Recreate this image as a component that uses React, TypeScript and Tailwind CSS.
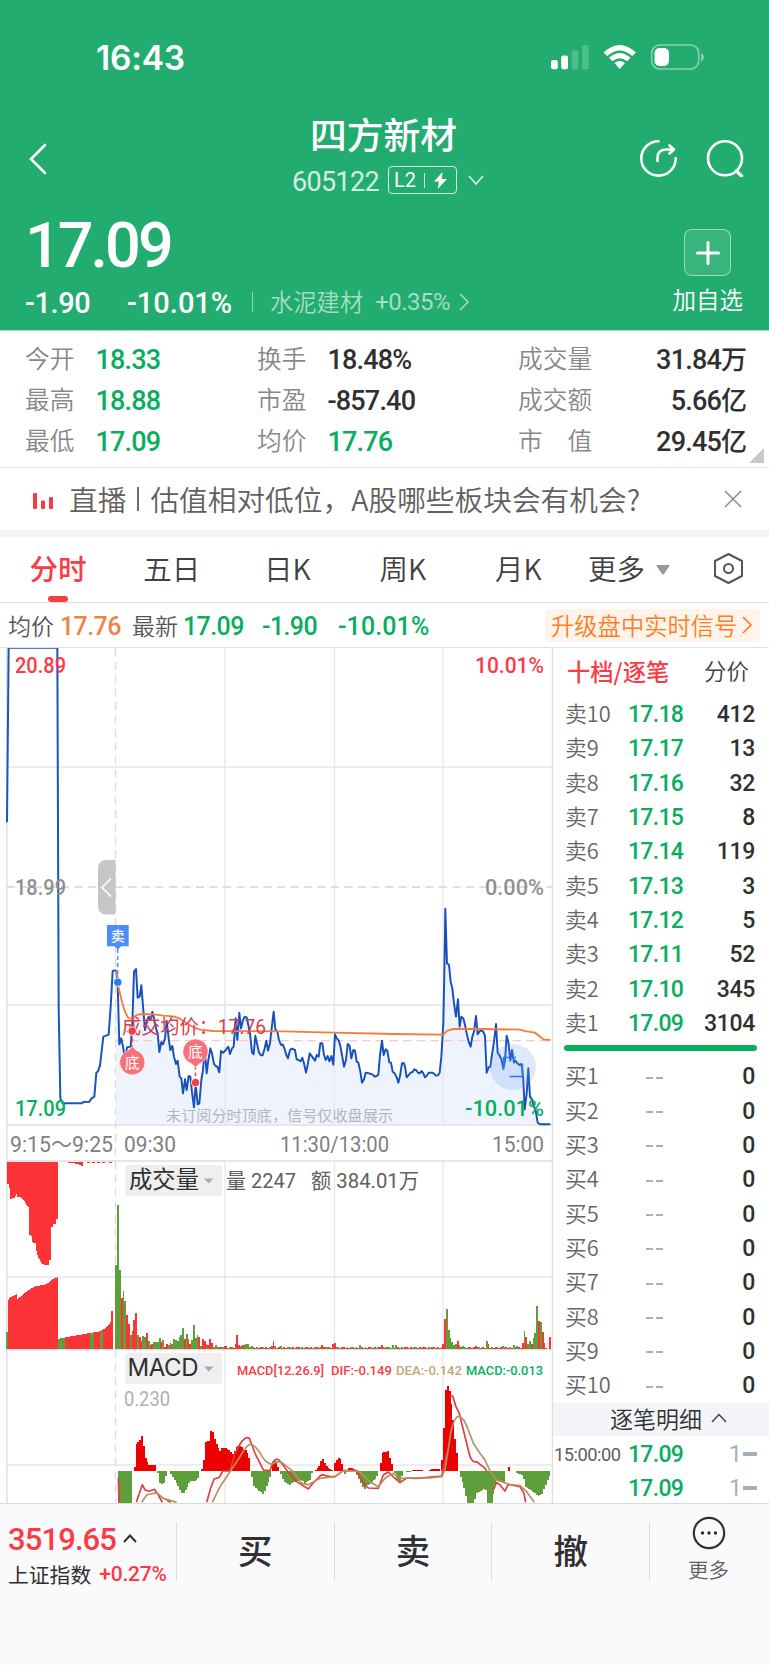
import type { ReactNode } from "react";

type Anchor = [number, number];

const GREEN = "#5f9f3b";
const RED = "#fe3338";

// One bar per minute. The plots use three units per pixel.
const BAR_STEP = 5.46;

const sellOrders = [
  { label: "卖10", price: "17.18", volume: 412 },
  { label: "卖9", price: "17.17", volume: 13 },
  { label: "卖8", price: "17.16", volume: 32 },
  { label: "卖7", price: "17.15", volume: 8 },
  { label: "卖6", price: "17.14", volume: 119 },
  { label: "卖5", price: "17.13", volume: 3 },
  { label: "卖4", price: "17.12", volume: 5 },
  { label: "卖3", price: "17.11", volume: 52 },
  { label: "卖2", price: "17.10", volume: 345 },
  { label: "卖1", price: "17.09", volume: 3104 },
];

const buyOrders = ["买1", "买2", "买3", "买4", "买5", "买6", "买7", "买8", "买9", "买10"];

const auctionLine =
  "21,547 26,23 172,23 176,1100 181,1375 188,1390 246,1390 250,1386 268,1385 274,1376 283,1370 289,1298 294,1294 300,1276 310,1190 326,1184 332,1100 338,993 348,991";

const priceLine =
  "349,990 353,1030 358,1213 364,1195 370,1225 375,1262 381,1222 392,1220 397,1150 402,995 408,987 413,1073 419,1070 424,1036 430,1110 435,1170 441,1142 446,1130 452,1140 457,1115 462,1135 468,1165 473,1180 478,1236 484,1206 489,1213 495,1195 500,1142 506,1195 511,1230 517,1218 522,1250 528,1272 533,1262 539,1310 544,1315 549,1360 555,1318 560,1350 566,1308 571,1310 577,1365 582,1402 587,1330 593,1393 598,1390 604,1320 609,1290 614,1225 620,1300 625,1260 631,1225 636,1240 642,1272 647,1278 652,1280 658,1297 663,1233 669,1238 674,1234 685,1220 690,1242 696,1225 701,1220 707,1135 712,1200 718,1118 723,1165 729,1140 734,1130 740,1132 745,1155 750,1180 756,1238 761,1243 766,1187 772,1215 777,1238 783,1246 788,1246 794,1225 799,1202 804,1232 810,1210 815,1165 821,1115 826,1168 832,1175 837,1200 843,1215 848,1213 853,1224 859,1245 864,1255 870,1230 875,1226 885,1230 890,1258 896,1260 902,1264 907,1253 912,1270 918,1298 923,1275 929,1240 934,1247 945,1262 950,1245 956,1250 961,1210 967,1210 972,1245 977,1260 983,1248 988,1264 994,1248 1000,1274 1005,1183 1010,1195 1016,1201 1021,1218 1026,1245 1032,1280 1038,1260 1043,1212 1049,1218 1054,1255 1060,1230 1065,1232 1070,1265 1075,1268 1081,1295 1086,1328 1092,1318 1097,1298 1108,1300 1118,1304 1124,1310 1130,1308 1135,1304 1140,1245 1146,1202 1151,1245 1157,1228 1162,1232 1168,1267 1173,1268 1178,1295 1184,1300 1190,1312 1195,1328 1200,1308 1206,1270 1212,1270 1216,1285 1220,1312 1232,1298 1238,1296 1243,1288 1248,1290 1254,1298 1259,1300 1265,1293 1270,1300 1275,1312 1281,1306 1286,1298 1297,1298 1303,1302 1308,1307 1314,1306 1319,1298 1324,1250 1330,1150 1333,1000 1336,806 1341,970 1347,975 1352,1025 1357,1045 1362,1090 1368,1130 1374,1078 1379,1160 1384,1130 1390,1135 1395,1155 1400,1180 1406,1205 1412,1220 1417,1190 1422,1175 1428,1128 1433,1183 1438,1175 1444,1170 1450,1176 1455,1188 1460,1298 1466,1282 1471,1280 1476,1245 1482,1205 1488,1152 1493,1238 1498,1245 1504,1258 1510,1285 1515,1262 1520,1187 1525,1205 1531,1262 1536,1230 1542,1268 1547,1262 1552,1270 1558,1275 1565,1272 1570,1320 1574,1408 1580,1360 1585,1285 1590,1370 1596,1378 1601,1400 1606,1405 1613,1448 1620,1453 1651,1453";

const averageLine =
  "350,990 356,1045 366,1085 375,1115 384,1133 395,1137 403,1130 412,1124 430,1122 460,1123 490,1127 520,1129 540,1136 560,1150 580,1162 600,1169 640,1173 850,1174 1000,1178 1180,1182 1330,1184 1342,1172 1360,1167 1450,1167 1560,1169 1580,1174 1605,1178 1615,1186 1630,1198 1651,1200";

const unmatchedVolume =
  "22,125 174,125 174,298 168,298 168,312 158,312 158,322 152,322 152,420 147,420 147,436 135,436 125,430 115,412 110,400 108,370 98,368 95,347 88,345 88,262 80,255 72,240 62,232 52,232 48,218 46,232 30,237 28,192 22,192";

const matchedVolume =
  "24,688 24,542 30,532 50,522 52,536 62,530 75,518 90,508 105,499 135,494 150,485 160,476 174,472 174,688";

// Opening volume, listed minute by minute: top of the bar and its direction
const openingVolume =
  "435g 254g 450g 534r 512g 542g 585r 612r 645g 634r 600r 578r 645g 652r 662r 648g 650g 638r 664g 675r 672r 667g 666g 665g 655g 665r 660g 680r 673r 676g 670r 672g 657g 660g 664g 652g 645g 625g 656r 642g 658r 672r 660g 615g 655g 645g 650r 678g 658r 662r 672g 675r 657r 668r 680g 676g 682r 680g 682r 680g 678r 679r 683g 682g 681r 683r 672r 645r 674r 677g 675r 674g 673g 671g 680g 678g".split(" ");

const volumeSpikes: Record<number, string> = {
  87: "664r", 86: "678r", 88: "678g", 91: "679g", 114: "676r", 117: "680g", 120: "672r", 121: "668r", 122: "680g",
  135: "675g", 147: "675r", 153: "676g", 155: "675g", 181: "672r", 182: "598r", 183: "567g", 184: "630g",
  185: "655g", 186: "665g", 187: "675g", 188: "673g", 189: "663r", 190: "675g", 192: "679g", 199: "679r",
  205: "664g", 206: "672r", 214: "679g", 220: "675g", 222: "678g", 225: "668r", 226: "632g", 227: "650r", 228: "673g",
  229: "664g", 230: "672r", 231: "655g", 232: "638g", 233: "557g", 234: "603r", 235: "605g", 236: "636r",
  237: "668r", 238: "683r", 240: "652r",
};

const macdUp: Anchor[][] = [
  [[404, 1040], [409, 972], [420, 962], [426, 949], [431, 975], [436, 1012], [447, 1035], [466, 1034]],
  [[606, 1046], [612, 1018], [617, 966], [628, 962], [633, 932], [638, 932], [643, 955], [655, 985], [660, 993], [668, 983], [685, 986], [700, 1003], [710, 980], [718, 975], [730, 985], [740, 990], [748, 1015], [753, 1045]],
  [[818, 1030], [826, 1018], [834, 1040], [839, 1050]],
  [[947, 1050], [960, 1035], [967, 1013], [974, 1028], [983, 1044], [998, 1050]],
  [[1005, 1030], [1015, 1012], [1024, 1018], [1029, 1045]],
  [[1040, 1049], [1048, 1042], [1066, 1049]],
  [[1142, 1030], [1147, 1000], [1155, 996], [1164, 994], [1170, 1018], [1178, 1040]],
  [[1240, 1050], [1268, 1050]],
  [[1290, 1049], [1306, 1046], [1322, 1049]],
  [[1327, 1020], [1331, 968], [1336, 815], [1342, 796], [1347, 800], [1352, 835], [1358, 880], [1363, 938], [1370, 995], [1375, 1018]],
  [[1527, 1040], [1530, 1040]],
];

const macdDown: Anchor[][] = [
  [[356, 1150], [396, 1150], [398, 1137]],
  [[475, 1060], [480, 1088], [490, 1094], [498, 1062]],
  [[513, 1062], [520, 1075], [535, 1098], [548, 1125], [560, 1105], [570, 1085], [585, 1082], [600, 1072]],
  [[756, 1070], [761, 1098], [780, 1115], [790, 1122], [800, 1098], [814, 1062]],
  [[843, 1062], [850, 1082], [868, 1095], [885, 1085], [905, 1080], [915, 1090], [930, 1080], [936, 1058]],
  [[1036, 1061], [1041, 1061]],
  [[1072, 1065], [1085, 1095], [1092, 1110], [1105, 1095], [1125, 1078], [1137, 1062]],
  [[1184, 1058], [1190, 1075], [1200, 1088], [1208, 1062]],
  [[1220, 1057], [1232, 1057]],
  [[1382, 1070], [1386, 1080], [1395, 1110], [1402, 1150], [1424, 1150], [1428, 1120], [1445, 1110], [1458, 1105], [1463, 1150], [1476, 1150], [1482, 1110], [1490, 1080], [1500, 1085], [1515, 1085], [1518, 1060]],
  [[1550, 1058], [1570, 1068], [1576, 1100], [1595, 1112], [1615, 1128], [1625, 1125], [1635, 1100], [1645, 1075], [1653, 1060]],
];

const difLine =
  "M355 1075L357 1147M409 1147L418 1120L427 1094L435 1110L447 1114L463 1108L475 1125L487 1147M500 1140L512 1147M620 1147L632 1105L642 1078L658 1072L668 1053L690 1053L705 1000L720 972Q738 946 748 955L765 1000L775 1020L790 1050L810 1052L820 1025Q832 1008 845 1030L860 1050L890 1085L925 1107L940 1088L965 1064L990 1070L1005 1070L1030 1052L1070 1052L1090 1090L1105 1104L1135 1105L1150 1065L1165 1056L1185 1075L1200 1088L1220 1074L1250 1075L1325 1068L1340 1000M1350 828L1358 828L1368 860L1378 880L1390 930L1405 990Q1414 1032 1430 1025L1455 1045L1460 1053M1480 1110L1490 1087L1500 1095L1515 1113L1525 1093L1560 1100L1572 1120L1577 1147";

const deaLine =
  "M425 1147L440 1125L470 1118L490 1135L530 1147M637 1147L660 1100L690 1055L720 1010Q740 973 752 973Q766 973 790 1015Q812 1043 830 1025L845 1027L880 1055L905 1090L925 1094L960 1075L1005 1070L1030 1052L1075 1053L1110 1085L1135 1100L1155 1075L1180 1060L1200 1075L1240 1074L1290 1074L1325 1070L1335 1050L1352 940Q1362 888 1378 889Q1392 893 1405 930L1420 970L1440 1000L1455 1020L1470 1053L1490 1080L1505 1085L1530 1094L1560 1097L1580 1115L1603 1147";

const volumeBar = (minute: number) => {
  if (minute < openingVolume.length) return openingVolume[minute];
  if (volumeSpikes[minute]) return volumeSpikes[minute];
  if (minute === 239) return null;
  const top = 681 + ((minute * 7) % 5) * 0.6;
  return `${top}${(minute * 5) % 7 < 4 ? "r" : "g"}`;
};

const barPath = (groups: Anchor[][], base: number) =>
  groups
    .map((anchors) => {
      let d = "";
      const end = anchors[anchors.length - 1][0];
      for (let x = anchors[0][0]; x <= end; x += BAR_STEP) {
        const next = Math.max(1, anchors.findIndex((a) => a[0] >= x));
        const [x0, y0] = anchors[next - 1];
        const [x1, y1] = anchors[next];
        const y = y0 + ((y1 - y0) * (x - x0)) / (x1 - x0);
        d += `M${x - 2.8} ${base}V${y}h5.7V${base}z`;
      }
      return d;
    })
    .join("");

const StatusBar = () => (
  <div className="flex h-[115px] justify-between pl-[96px] pr-[64px] pt-[38px]">
    <span className="font-['Inter'] text-[33.5px] font-semibold leading-[40px] tracking-[-0.2px]">16:43</span>
    <svg className="mt-[4px]" width="155" height="30" viewBox="550 42 155 30" fill="white">
      <rect x="551" y="60" width="6.8" height="9.3" rx="2" />
      <rect x="561.2" y="55.5" width="6.8" height="13.8" rx="2" />
      <rect x="571.6" y="50" width="6.8" height="19.3" rx="2" opacity=".2" />
      <rect x="582" y="45" width="6.8" height="24.3" rx="2" opacity=".2" />
      <path d="M603.5 52.5Q619.7 37.5 636 52.5L632.3 56Q619.7 44.8 607.2 56zM609 57.8Q619.7 48.4 630.5 57.8L627 61.2Q619.7 55.2 612.5 61.2zM614.4 63Q619.7 59 625 63L619.7 69z" />
      <rect x="651.7" y="45" width="47" height="24" rx="8" fill="none" stroke="white" strokeWidth="1.6" opacity=".45" />
      <rect x="654.5" y="48" width="14.5" height="18" rx="5" />
      <path d="M701.2 53v8.5q2.6-1.4 2.6-4.2t-2.6-4.3z" opacity=".5" />
    </svg>
  </div>
);

const Header = () => (
  <header className="h-[331px] border-b border-[#a9dec5] bg-[#22ac6f] text-white">
    <StatusBar />
    <div className="flex h-[90px] justify-between pl-[28px] pr-[25px]">
      <svg className="mt-[28px]" width="20" height="32" viewBox="0 0 20 32" fill="none" stroke="white" strokeWidth="2.6" strokeLinecap="round">
        <path d="M17 2L3 16l14 14" />
      </svg>
      <div className="ml-[80px] flex w-[200px] flex-col items-center">
        <h1 className="-mt-[3px] whitespace-nowrap text-[36.8px] font-medium leading-[42px]">四方新材</h1>
        <div className="ml-[9px] mt-[11px] flex h-[30px] items-center">
          <span className="pt-[3px] font-['Roboto'] text-[27px] leading-[30px] tracking-[-0.7px] text-white/80">605122</span>
          <div className="ml-[9px] flex h-[28px] w-[69px] items-center justify-between rounded-[4px] border border-white/80 pl-[5px] pr-[9px]">
            <span className="font-['Roboto'] text-[20px] leading-none">L2</span>
            <span className="h-[15px] w-px bg-white/80" />
            <svg width="13" height="17" viewBox="0 0 13 17" fill="white">
              <path d="M8.5 0L0 9.5h5L3.8 17 13 7H7.8z" />
            </svg>
          </div>
          <svg className="ml-[11px]" width="16" height="11" viewBox="0 0 16 11" fill="none" stroke="white" strokeOpacity=".85" strokeWidth="1.5">
            <path d="M1 1l7 8 7-8" />
          </svg>
        </div>
      </div>
      <svg className="mt-[22px]" width="105" height="40" viewBox="639 137 105 40" fill="none" stroke="white" strokeWidth="2.6" strokeLinecap="round" strokeLinejoin="round">
        <path d="M658.5 141.2a17.2 17.2 0 1 0 17.2 17.2M657.5 161v-3q0-8.500 9-8.500h7M669.500 145.500l4.500 4-4.500 4" />
        <circle cx="725" cy="158.300" r="17" />
        <path d="M736.500 171l5 5" strokeWidth="3.400" />
      </svg>
    </div>
    <div className="flex justify-between pl-[25px] pr-[26px]">
      <div>
        <div className="h-[79px] pt-[9px] font-['Roboto'] text-[63px] font-medium leading-[63px] tracking-[-3px]">17.09</div>
        <div className="flex h-[36px] items-center whitespace-nowrap">
          <span className="w-[102px] pt-[3px] font-['Roboto'] text-[29px] font-medium tracking-[-0.4px]">-1.90</span>
          <span className="w-[125px] pt-[3px] font-['Roboto'] text-[29px] font-medium">-10.01%</span>
          <span className="h-[20px] w-px bg-white/50" />
          <span className="-mt-[2px] ml-[17px] text-[23.3px] font-[350] text-white/60">水泥建材</span>
          <span className="ml-[12px] w-[76px] font-['Roboto'] text-[24px] tracking-[-0.5px] text-white/60">+0.35%</span>
          <svg className="ml-[8px]" width="11" height="18" viewBox="0 0 11 18" fill="none" stroke="white" strokeOpacity=".6" strokeWidth="1.500">
            <path d="M1 1l8 8-8 8" />
          </svg>
        </div>
      </div>
      <div className="flex flex-col items-center pt-[24px]">
        <div className="flex h-[47px] w-[47px] items-center justify-center rounded-[8px] border border-white/50 bg-white/10">
          <svg width="24" height="24" viewBox="0 0 24 24" stroke="white" strokeWidth="3" strokeLinecap="round">
            <path d="M12 1.500v21M1.500 12h21" />
          </svg>
        </div>
        <span className="mt-[7px] text-[23.5px] font-[350] leading-[32px]">加自选</span>
      </div>
    </div>
  </header>
);

interface StatProps {
  label: string;
  value: string;
  unit?: string;
  up?: boolean;
}

const Stat = ({ label, value, unit, up }: StatProps) => (
  <div className="flex h-[41px] items-center">
    <span className="whitespace-pre text-[24.7px] font-[350] text-[#888]">{label}</span>
    <span
      className={`mt-[6px] font-['Roboto','Noto_Sans_CJK_SC'] text-[27px] font-medium tracking-[-0.8px] ${up ? "text-[#08ad5e]" : "text-[#303030]"} ${unit ? "ml-auto" : "ml-[21px]"}`}
    >
      {value}
      {unit && <span className="text-[26px] tracking-normal">{unit}</span>}
    </span>
  </div>
);

const Stats = () => (
  <section className="relative grid h-[137px] auto-rows-[41px] grid-cols-[232px_261px_229px] content-start border-b border-[#e8e8ea] pl-[25px] pt-[6px]">
    <Stat label="今开" value="18.33" up />
    <Stat label="换手" value="18.48%" />
    <Stat label="成交量" value="31.84" unit="万" />
    <Stat label="最高" value="18.88" up />
    <Stat label="市盈" value="-857.40" />
    <Stat label="成交额" value="5.66" unit="亿" />
    <Stat label="最低" value="17.09" up />
    <Stat label="均价" value="17.76" up />
    <Stat label="市　值" value="29.45" unit="亿" />
    <svg className="absolute bottom-[4px] right-[5px]" width="15" height="15" viewBox="0 0 15 15" fill="#c9c9c9">
      <path d="M15 0v15H0z" />
    </svg>
  </section>
);

const LiveNotice = () => (
  <section className="flex h-[62px] items-center pl-[32px] pr-[27px]">
    <svg className="mt-[3px]" width="22" height="16" viewBox="0 0 22 16" fill="#f93b45">
      <rect x="1" width="4" height="16" rx="1" />
      <rect x="9" y="7.5" width="4" height="8.5" rx="1" />
      <rect x="17" y="4" width="4" height="12" rx="1" />
    </svg>
    <span className="ml-[15px] flex items-center whitespace-nowrap text-[28.7px] font-[350] text-[#606060]">
      直播
      <span className="mx-[11px] h-[24px] w-[2px] bg-[#707070]" />
      估值相对低位，A股哪些板块会有机会?
    </span>
    <svg className="ml-auto" width="18" height="18" viewBox="0 0 18 18" stroke="#8a8a8a" strokeWidth="1.5">
      <path d="M1 1l16 16M17 1L1 17" />
    </svg>
  </section>
);

const tabs = ["五日", "日K", "周K", "月K"];

const PeriodTabs = () => (
  <nav className="flex h-[73px] items-center border-b border-t-[7px] border-b-[#dedede] border-t-[#f2f4f8] pr-[26px] text-[28.5px] text-[#404040]">
    <div className="flex h-full w-[114px] flex-col items-center justify-between pl-[2px] pt-[10px] font-medium text-[#f93b45]">
      <span className="leading-[42px]">分时</span>
      <span className="h-[6px] w-[20px] rounded-[3px] bg-[#f93b45]" />
    </div>
    {tabs.map((tab) => (
      <span key={tab} className="-mt-[2px] w-[115.5px] text-center font-[350]">
        {tab}
      </span>
    ))}
    <span className="-mt-[2px] ml-[12px] font-[350]">更多</span>
    <svg className="ml-[11px]" width="14" height="10" viewBox="0 0 14 10" fill="#999">
      <path d="M1 0h12q1 0 .5 1L8 9Q7 10 6 9L.5 1Q0 0 1 0z" />
    </svg>
    <svg className="-mt-[2px] ml-auto" width="29" height="31" viewBox="0 0 29 31" fill="none" stroke="#555" strokeWidth="2" strokeLinejoin="round">
      <path d="M14.5 1L28 8v15l-13.500 7L1 23V8z" />
      <circle cx="14.500" cy="15.500" r="4.500" />
    </svg>
  </nav>
);

const PriceSummary = () => (
  <section className="flex h-[45px] items-center whitespace-nowrap border-b border-[#e2e2e4] pl-[8px] pr-[9px] text-[23px] font-[350] text-[#555]">
    <span>均价</span>
    <span className="ml-[6px] w-[72px] pt-[3px] font-['Roboto'] text-[25px] font-medium tracking-[-0.6px] text-[#f0824b]">17.76</span>
    <span>最新</span>
    <div className="flex pl-[5px] pt-[3px] font-['Roboto'] text-[25px] font-medium tracking-[-0.6px] text-[#08ad5e]">
      <span className="w-[79px]">17.09</span>
      <span className="w-[76px]">-1.90</span>
      <span className="tracking-[0.1px]">-10.01%</span>
    </div>
    <div className="ml-auto flex h-[33px] w-[215px] items-center rounded-[5px] bg-[#fff3ea] pl-[6px] text-[23.3px] text-[#ff7d20]">
      升级盘中实时信号
      <svg className="ml-[5px]" width="11" height="18" viewBox="0 0 11 18" fill="none" stroke="#ff7d20" strokeWidth="1.7">
        <path d="M1 1l8 8-8 8" />
      </svg>
    </div>
  </section>
);

interface LabelProps {
  x: number;
  y: number;
  width: number;
  color: string;
  size?: number;
  weight?: number;
  children: ReactNode;
}

const Label = ({ x, y, width, color, size = 22, weight = 400, children }: LabelProps) => (
  <text
    x={x}
    y={y}
    textLength={width}
    lengthAdjust="spacingAndGlyphs"
    fontSize={size}
    fontWeight={weight}
    fill={color}
    fontFamily="Roboto, 'Noto Sans CJK SC', sans-serif"
  >
    {children}
  </text>
);

const Grid = () => (
  <g fill="none" stroke="#e8e8ea" strokeWidth="1.4">
    <path d="M7 767H552M7 1005H552M7 1277H552M7 1465H552" />
    <path d="M225 648V1125M334.500 648V1125M443 648V1125M225 1161V1503M334.500 1161V1503M443 1161V1503" />
    <path d="M7 1125H552M7 1161H552M7 1349.500H552" stroke="#dededf" />
    <path d="M6.800 648V1503M552.500 648V1503" stroke="#dedee0" />
    <path d="M115.500 648V1503" strokeDasharray="8 5.500" stroke="#dcdcde" />
    <path d="M7 887H552" strokeDasharray="8 5.500" stroke="#ccd6df" />
  </g>
);

const PricePlot = () => (
  <g transform="translate(0 640) scale(.33333)" fill="none" strokeLinejoin="round">
    <polygon points={`348,1453 ${priceLine}`} fill="#eef3fe" />
    <path d="M675 1080V1453M1003 1080V1453M1329 1080V1453M348 1096H1651" stroke="#e6e8ee" strokeWidth="4" />
    <path d="M348 1202H1651" stroke="#f9c8cd" strokeWidth="4" strokeDasharray="26 15" />
    <polyline points={auctionLine} stroke="#1b55bd" strokeWidth="6" />
    <polyline points={priceLine} stroke="#1650b8" strokeWidth="5.800" />
    <polyline points={averageLine} stroke="#fb7a39" strokeWidth="5.500" />
  </g>
);

const PriceLabels = () => (
  <g>
    <Label x={15} y={672.500} width={51} color="#f93b45" weight={500}>20.89</Label>
    <Label x={475} y={672.500} width={69} color="#f93b45" weight={500}>10.01%</Label>
    <Label x={15} y={895} width={51} color="#909090" weight={500}>18.99</Label>
    <Label x={485} y={895} width={59} color="#909090" weight={500}>0.00%</Label>
    <Label x={15} y={1116} width={51} color="#08ad5e" weight={500}>17.09</Label>
    <Label x={465} y={1116} width={79} color="#08ad5e" weight={500}>-10.01%</Label>
    <Label x={166} y={1121} width={227} size={15.200} color="#b4b6bb">未订阅分时顶底，信号仅收盘展示</Label>
    <Label x={10} y={1151.500} width={103} color="#808080">9:15～9:25</Label>
    <Label x={124} y={1151.500} width={52} color="#808080">09:30</Label>
    <Label x={280} y={1151.500} width={109} color="#808080">11:30/13:00</Label>
    <Label x={492} y={1151.500} width={52} color="#808080">15:00</Label>
  </g>
);

const Markers = () => (
  <g>
    <path d="M115.500 860h-9q-8.500 0-8.500 8.500v37.500q0 8.500 8.500 8.500h9z" fill="#c6c6c6" />
    <path d="M111 878.500l-9 9 9 9" fill="none" stroke="white" strokeWidth="1.700" />
    <path d="M117.700 949V978" stroke="#4c8dfb" strokeWidth="1.500" strokeDasharray="4 3" />
    <path d="M107 925h21.700v21.300h-7.500l-3.400 3.200-3.400-3.200H107z" fill="#4c8dfb" />
    <text x="117.800" y="941" textAnchor="middle" fontSize="14" fontWeight="500" fill="white">卖</text>
    <circle cx="117.800" cy="982.300" r="4.200" fill="#2c7bfb" stroke="white" strokeWidth=".8" />
    <Label x={122} y={1034} width={144} size={20} color="#dd3e4b">成交均价：17.76</Label>
    <path d="M132.200 1031v18" stroke="#f93b45" strokeWidth="1.500" strokeDasharray="4 3" />
    <circle cx="132.200" cy="1031" r="4.200" fill="#f93b45" stroke="white" strokeWidth=".8" />
    <path d="M128 1050.500l4.300-4 4.300 4a12.600 12.600 0 1 1-8.600 0z" fill="#f87079" stroke="white" strokeWidth=".6" />
    <text x="132.300" y="1068" textAnchor="middle" fontSize="15" fill="white">底</text>
    <path d="M195.500 1066v16" stroke="#f93b45" strokeWidth="1.500" strokeDasharray="3.500 3" />
    <circle cx="195.500" cy="1082.600" r="4.200" fill="#f93b45" stroke="white" strokeWidth=".8" />
    <path d="M191.200 1063.500l4.300 3.800 4.300-3.800a12.600 12.600 0 1 0-8.600 0z" fill="#f87079" stroke="white" strokeWidth=".6" />
    <text x="195.500" y="1057" textAnchor="middle" fontSize="15" fill="white">底</text>
    <circle cx="513" cy="1067" r="23" fill="#6a9bf5" opacity=".22" />
    <path d="M503.500 1070v-12.500H516M509.500 1076.500h13V1064" fill="none" stroke="#2b74f8" strokeWidth="1.500" />
  </g>
);

const VolumePlot = () => (
  <g transform="translate(0 1120) scale(.33333)" fill={RED} shapeRendering="crispEdges">
    <polygon points={unmatchedVolume} />
    <path d="M192 125H248V138L232 132L215 128L192 127zM260 125H270V130H260zM276 125h10v3h-10zM292 125h8v3h-8zM306 125h8v3h-8zM328 125h7v3h-7z" />
    <polygon points={matchedVolume} />
    <path d="M196 652L300 634L320 622L332 606L334 574H340V688H196z" />
    <path d="M18 635H24V688H18zM174 657L196 652V688H174zM270 641L281 638V688H270zM301 634L309 631V688H301z" fill={GREEN} />
    {Array.from({ length: 241 }, (_, minute) => {
      const bar = volumeBar(minute);
      if (!bar) return null;
      const top = parseFloat(bar);
      return (
        <rect
          key={minute}
          x={346 + minute * 5.42}
          y={top}
          width={5.5}
          height={688 - top}
          fill={bar.endsWith("g") ? GREEN : RED}
        />
      );
    })}
  </g>
);

const MacdPlot = () => (
  <g transform="translate(0 1120) scale(.33333)">
    <path d={barPath(macdUp, 1053)} fill="#ee0000" shapeRendering="crispEdges" />
    <path d={barPath(macdDown, 1053)} fill={GREEN} shapeRendering="crispEdges" />
    <path d={difLine} fill="none" stroke="#e63a40" strokeWidth="5" strokeLinejoin="round" />
    <path d={deaLine} fill="none" stroke="#b2935c" strokeWidth="5" strokeLinejoin="round" />
  </g>
);

const IndicatorLabels = () => (
  <g>
    <rect x="125" y="1165" width="97" height="31" rx="3" fill="#efefef" />
    <Label x={129} y={1188} width={70} size={23.500} color="#303030">成交量</Label>
    <path d="M204 1178.500h9.500l-4.700 5z" fill="#aaa" />
    <Label x={226} y={1187.500} width={70} size={21} color="#606060">量 2247</Label>
    <Label x={311} y={1187.500} width={108} size={21} color="#606060">额 384.01万</Label>
    <rect x="125" y="1353" width="97" height="31" rx="3" fill="#efefef" />
    <text x="127.500" y="1376" textLength="71" fontSize="24" fill="#303030" fontFamily="Inter">MACD</text>
    <path d="M204 1366.500h9.500l-4.700 5z" fill="#aaa" />
    <Label x={237} y={1374.500} width={87} size={13.500} weight={500} color="#f93b45">MACD[12.26.9]</Label>
    <Label x={331} y={1374.500} width={61} size={13.500} weight={500} color="#f93b45">DIF:-0.149</Label>
    <Label x={396} y={1374.500} width={66} size={13.500} weight={500} color="#c0a674">DEA:-0.142</Label>
    <Label x={466} y={1374.500} width={77} size={13.500} weight={500} color="#08ad5e">MACD:-0.013</Label>
    <Label x={124} y={1405.500} width={46} size={20.500} color="#b0b0b0">0.230</Label>
  </g>
);

const IntradayChart = () => (
  <svg className="shrink-0 overflow-hidden" width="553" height="855" viewBox="0 648 553 855">
    <Grid />
    <PricePlot />
    <PriceLabels />
    <Markers />
    <VolumePlot />
    <MacdPlot />
    <IndicatorLabels />
  </svg>
);

interface OrderRowProps {
  label: string;
  price: ReactNode;
  volume: number;
}

const OrderRow = ({ label, price, volume }: OrderRowProps) => (
  <div className="flex h-[34.35px] items-center pl-[12px] pr-[14px]">
    <span className="-mt-[2px] w-[63px] text-[21.8px] font-[350] text-[#666]">{label}</span>
    <span className="w-[56px] pt-[2px] font-['Roboto'] text-[23px] font-medium tracking-[-0.7px] text-[#08ad5e]">{price}</span>
    <span className="ml-auto pt-[2px] font-['Roboto'] text-[23px] font-medium tracking-[-0.3px] text-[#303030]">{volume}</span>
  </div>
);

const EmptyPrice = () => (
  <span className="flex justify-center gap-[3px] pr-[4px]">
    <span className="h-[2px] w-[7px] bg-[#a9b0b8]" />
    <span className="h-[2px] w-[7px] bg-[#a9b0b8]" />
  </span>
);

const TickRow = ({ time }: { time?: string }) => (
  <div className="flex h-[34.35px] items-center pl-[1px] pr-[12px] font-['Roboto']">
    <span className="w-[74px] text-[18.3px] tracking-[-0.5px] text-[#606060]">{time}</span>
    <span className="text-[23px] font-medium tracking-[-0.7px] text-[#08ad5e]">17.09</span>
    <span className="ml-auto text-[23px] text-[#a7afb8]">1</span>
    <span className="-mt-[3px] ml-[1px] h-[4px] w-[14px] bg-[#a7afb8]" />
  </div>
);

const OrderBook = () => (
  <aside className="w-[216px] shrink-0">
    <div className="flex h-[49px] items-center justify-between whitespace-nowrap pb-[3px] pl-[14px] pr-[20px]">
      <span className="text-[23.3px] font-medium text-[#f93b45]">十档/逐笔</span>
      <span className="text-[22.5px] font-[350] text-[#404040]">分价</span>
    </div>
    {sellOrders.map((order) => (
      <OrderRow key={order.label} {...order} />
    ))}
    <div className="mb-[8px] ml-[11px] mt-[5px] h-[6px] w-[193px] rounded-full bg-[#08ad5e]" />
    {buyOrders.map((label) => (
      <OrderRow key={label} label={label} price={<EmptyPrice />} volume={0} />
    ))}
    <div className="flex h-[33px] items-center justify-center bg-[#f2f4f8] pb-[2px] pl-[15px] text-[23px] font-[350] text-[#303030]">
      逐笔明细
      <svg className="ml-[9px]" width="16" height="10" viewBox="0 0 16 10" fill="none" stroke="#404040" strokeWidth="1.500">
        <path d="M1 9l7-7.500L15 9" />
      </svg>
    </div>
    <div className="pt-[2px]">
      <TickRow time="15:00:00" />
      <TickRow />
    </div>
  </aside>
);

const tradeActions = ["买", "卖", "撤"];

const BottomBar = () => (
  <footer className="flex h-[162px] border-t border-[#dcdce0] bg-[#fafafd] pt-[18px]">
    <div className="w-[176px] shrink-0 whitespace-nowrap pl-[8px] text-[#f93b45]">
      <div className="flex h-[36px] items-center">
        <span className="pt-[1px] font-['Roboto'] text-[31px] font-medium tracking-[-0.9px]">3519.65</span>
        <svg className="-mt-[3px] ml-[7px]" width="14" height="9" viewBox="0 0 14 9" fill="none" stroke="#303030" strokeWidth="1.900">
          <path d="M1 8l6-6.500L13 8" />
        </svg>
      </div>
      <div className="flex h-[34px] items-center">
        <span className="-mt-[1px] text-[20.8px] text-[#303030]">上证指数</span>
        <span className="ml-[8px] font-['Roboto'] text-[21px] font-medium tracking-[-0.2px]">+0.27%</span>
      </div>
    </div>
    {tradeActions.map((action) => (
      <button key={action} className="h-[59px] w-[157.7px] border-l border-[#dedee2] pb-[4px] text-[34.5px] font-medium text-[#303030]">
        {action}
      </button>
    ))}
    <div className="flex h-[59px] flex-1 flex-col items-center border-l border-[#dedee2] pr-[2px]">
      <svg className="-mt-[6px] shrink-0" width="34" height="34" viewBox="0 0 34 34" fill="none" stroke="#303030" strokeWidth="2.200">
        <circle cx="17" cy="17" r="15.200" />
        <g fill="#303030" stroke="none">
          <circle cx="10.500" cy="17" r="1.700" />
          <circle cx="17" cy="17" r="1.700" />
          <circle cx="23.500" cy="17" r="1.700" />
        </g>
      </svg>
      <span className="mt-[4px] text-[20.5px] font-[350] leading-[30px] text-[#606060]">更多</span>
    </div>
  </footer>
);

const App = () => (
  <div className="h-[1665px] w-[769px] overflow-hidden bg-white font-['Noto_Sans_CJK_SC',sans-serif]">
    <Header />
    <Stats />
    <LiveNotice />
    <PeriodTabs />
    <PriceSummary />
    <main className="flex h-[855px]">
      <IntradayChart />
      <OrderBook />
    </main>
    <BottomBar />
  </div>
);

export default App;
